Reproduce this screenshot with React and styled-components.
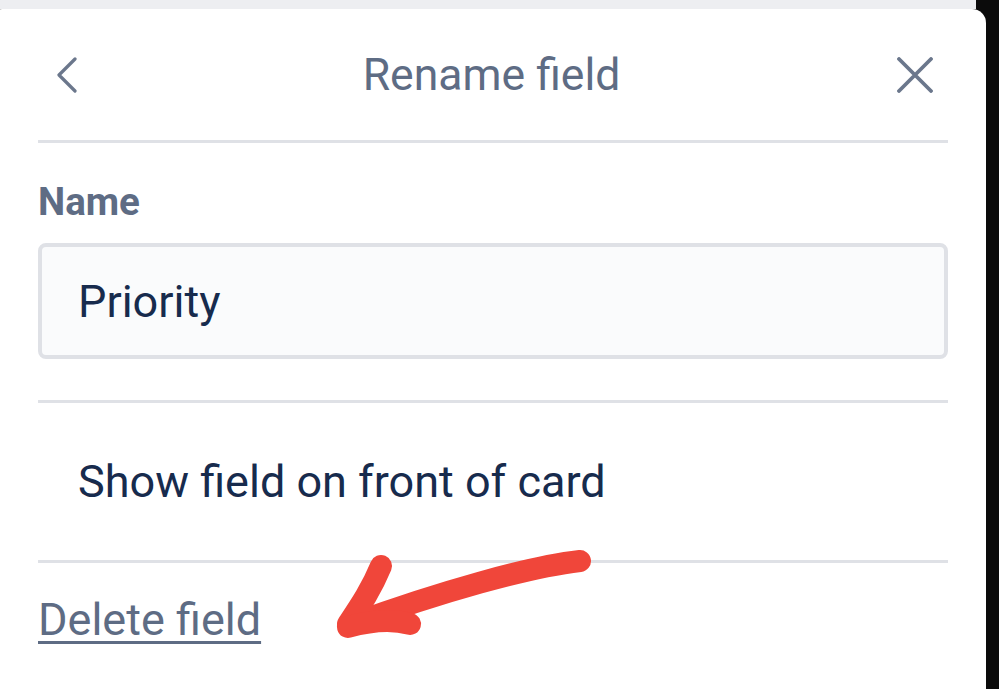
import React from 'react';
import styled, { createGlobalStyle } from 'styled-components';

const GlobalStyle = createGlobalStyle`
    html, body {
        margin:0;
        padding:0;
        background:#0b0b0b;
        overflow:hidden;
    }
    body {
        font-family:Roboto, "Liberation Sans", sans-serif;
    }
`;

const Screen = styled.div`
    width:999px;
    height:689px;
    overflow:hidden;
    background:#0b0b0b;
    display:flex;
    flex-direction:column;
`;

const TopStrip = styled.div`
    width:976px;
    height:9px;
    flex-shrink:0;
    background:#edeef1;
`;

const Panel = styled.div`
    position:relative;
    width:990px;
    flex:1;
    margin-left:-4px;
    padding:0 38px 0 42px;
    box-sizing:border-box;
    background:#fff;
    border-radius:6px 14px 0 0;
    display:flex;
    flex-direction:column;
`;

const Header = styled.div`
    height:131px;
    display:flex;
    align-items:center;
    justify-content:space-between;
    padding:0 13px 0 10px;
`;

const Title = styled.h1`
    margin:0;
    font-size:44.5px;
    font-weight:400;
    color:#5e6c84;
`;

const IconBtn = styled.button`
    width:40px;
    height:40px;
    padding:0;
    border:none;
    background:none;
    display:flex;
    align-items:center;
    justify-content:center;
    color:#6b778c;
`;

const Divider = styled.div`
    height:3px;
    flex-shrink:0;
    background:#dfe1e6;
`;

const Label = styled.div`
    margin-top:37px;
    font-size:38.5px;
    font-weight:700;
    color:#5e6c84;
    line-height:44px;
`;

const Input = styled.div`
    margin:19px 0 41px;
    height:116px;
    box-sizing:border-box;
    border:4px solid #dfe1e6;
    border-radius:8px;
    background:#fafbfc;
    padding-left:36px;
    display:flex;
    align-items:center;
    font-size:45px;
    color:#172b4d;
`;

const Option = styled.div`
    height:157px;
    display:flex;
    align-items:center;
    padding-left:40px;
    font-size:45px;
    color:#172b4d;
`;

const DeleteLink = styled.a`
    margin-top:31px;
    align-self:flex-start;
    font-size:45px;
    line-height:52px;
    color:#5e6c84;
    text-decoration:underline;
    text-decoration-thickness:3px;
    text-underline-offset:6px;
    cursor:pointer;
`;

const Arrow = styled.svg`
    position:absolute;
    left:0;
    top:0;
    pointer-events:none;
`;

const App = () => (
    <Screen>
        <GlobalStyle />
        <TopStrip />
        <Panel>
            <Header>
                <IconBtn aria-label="Back">
                    <svg width="26" height="36" viewBox="0 0 26 36" fill="none" stroke="currentColor" strokeWidth="3.2" strokeLinecap="round" strokeLinejoin="round">
                        <path d="M20 2 L4 18 L20 34" />
                    </svg>
                </IconBtn>
                <Title>Rename field</Title>
                <IconBtn aria-label="Close">
                    <svg width="36" height="36" viewBox="0 0 36 36" fill="none" stroke="currentColor" strokeWidth="3.8" strokeLinecap="round">
                        <path d="M2 2 L34 34 M34 2 L2 34" />
                    </svg>
                </IconBtn>
            </Header>
            <Divider />
            <Label>Name</Label>
            <Input>Priority</Input>
            <Divider />
            <Option>Show field on front of card</Option>
            <Divider />
            <DeleteLink>Delete field</DeleteLink>
            <Arrow width="990" height="680" viewBox="0 0 990 680">
                <g fill="none" stroke="#f0463a" strokeWidth="22" strokeLinecap="round" strokeLinejoin="round" transform="translate(4 -9)">
                    <path d="M580 561 C 528 567, 440 592, 352 624" />
                    <path d="M381 566 C 371 590, 360 606, 348 624" />
                    <path d="M348 627 C 370 621, 392 619, 410 624" />
                </g>
            </Arrow>
        </Panel>
    </Screen>
);

export default App;
